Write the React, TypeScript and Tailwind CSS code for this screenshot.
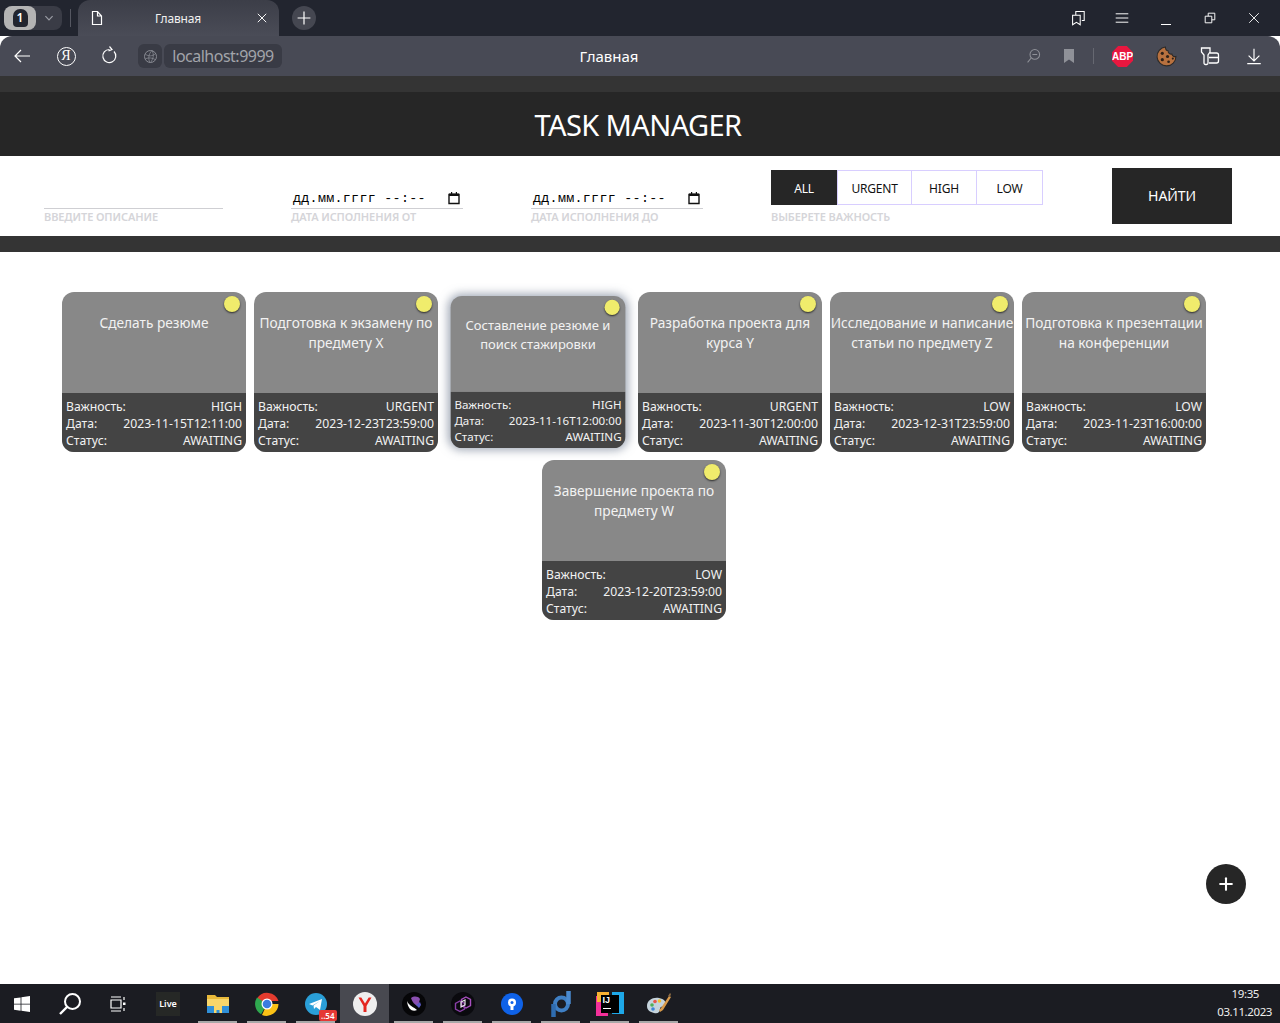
import { Plus } from 'lucide-react';

const SANS = "font-['Noto_Sans','Open_Sans',sans-serif]";

interface Task {
  title: string;
  priority: string;
  date: string;
  hovered?: boolean;
}

const TASKS: Task[] = [
  { title: 'Сделать резюме', priority: 'HIGH', date: '2023-11-15T12:11:00' },
  { title: 'Подготовка к экзамену по предмету X', priority: 'URGENT', date: '2023-12-23T23:59:00' },
  { title: 'Составление резюме и поиск стажировки', priority: 'HIGH', date: '2023-11-16T12:00:00', hovered: true },
  { title: 'Разработка проекта для курса Y', priority: 'URGENT', date: '2023-11-30T12:00:00' },
  { title: 'Исследование и написание статьи по предмету Z', priority: 'LOW', date: '2023-12-31T23:59:00' },
  { title: 'Подготовка к презентации на конференции', priority: 'LOW', date: '2023-11-23T16:00:00' },
  { title: 'Завершение проекта по предмету W', priority: 'LOW', date: '2023-12-20T23:59:00' },
];

const Stroke = ({ children, size = 20, className = 'text-white' }: { children: React.ReactNode; size?: number; className?: string }) => (
  <svg width={size} height={size} viewBox="0 0 20 20" fill="none" stroke="currentColor" strokeWidth="1.3" className={className}>
    {children}
  </svg>
);

const TabBar = () => (
  <div className="flex h-9 bg-[#22252f] text-white">
    <div className="ml-1 mt-1.5 flex h-6 w-[58px] rounded-lg bg-[#3a3c46]">
      <div className="flex h-6 w-8 items-center justify-center rounded-lg bg-[#b4b4b4]">
        <div className="flex h-[18px] w-[15px] items-center justify-center rounded-[4px] rounded-t-[7px] bg-[#22252f] text-xs font-semibold leading-none">1</div>
      </div>
      <div className="flex flex-1 items-center justify-center">
        <Stroke size={12} className="text-[#9a9ca4]"><path d="M4 7l6 6 6-6" strokeWidth="2" /></Stroke>
      </div>
    </div>
    <div className="ml-2 mt-[9px] h-[18px] w-px bg-[#555761]" />
    <div className="ml-[7px] flex h-9 w-[201px] items-center rounded-t-xl bg-gradient-to-b from-[#3c3e48] to-[#4a4c57] pl-3 pr-[11px]">
      <svg width="14" height="16" viewBox="0 0 14 16" fill="none" stroke="white" strokeWidth="1.2">
        <path d="M2.5 1.5h5l4 4.5v8.500h-9zM7.500 1.500v4.500h4" />
      </svg>
      <span className={`${SANS} flex-1 pr-[4px] pt-px text-center text-xs tracking-[-0.15px] text-[#f0f0f0]`}>Главная</span>
      <Stroke size={12} className="text-white"><path d="M3 3l14 14M17 3L3 17" strokeWidth="1.6" /></Stroke>
    </div>
    <div className="ml-[13px] mt-1.5 flex h-6 w-6 items-center justify-center rounded-full bg-[#454751]">
      <Stroke size={16}><path d="M10 2v16M2 10h16" strokeWidth="1.5" /></Stroke>
    </div>
    <div className="flex-1" />
    <div className="mr-1 flex">
      <div className="flex w-11 items-center justify-center pl-0.5">
        <Stroke size={16}>
          <path d="M2 6.500h9.500v12l-4.750-3-4.750 3zM6 6V2h10.500v11h-3" />
        </Stroke>
      </div>
      <div className="flex w-11 items-center justify-center">
        <Stroke size={14}><path d="M1 4h18M1 10h18M1 16h18" strokeWidth="1.4" /></Stroke>
      </div>
      <div className="flex w-11 items-center justify-center pt-3">
        <div className="h-px w-2.5 bg-white" />
      </div>
      <div className="flex w-11 items-center justify-center">
        <Stroke size={12}><path d="M2 7h11v11H2zM7 7V2h11v11h-5" strokeWidth="1.6" /></Stroke>
      </div>
      <div className="flex w-11 items-center justify-center">
        <Stroke size={12}><path d="M2 2l16 16M18 2L2 18" strokeWidth="1.5" /></Stroke>
      </div>
    </div>
  </div>
);

const ToolBar = () => (
  <div className="flex h-10 items-center rounded-t-xl bg-[#484a55] text-white">
    <div className="flex w-11 items-center justify-center">
      <Stroke size={20}><path d="M18 10H3M9 4l-6 6 6 6" strokeWidth="1.2" /></Stroke>
    </div>
    <div className="flex w-11 items-center justify-center">
      <div className="flex h-[19px] w-[19px] items-center justify-center rounded-full border border-white font-['Liberation_Serif',serif] text-sm leading-none">Я</div>
    </div>
    <div className="flex w-11 items-center justify-center">
      <Stroke size={20}><path d="M14 5.500a6.500 6.500 0 1 1-4.500-2M9.500 0.500l2.500 3-3.500 1.500" strokeWidth="1.2" /></Stroke>
    </div>
    <div className="ml-1.5 flex h-6 w-6 items-center justify-center rounded-md bg-[#393b45]">
      <Stroke size={15} className="text-[#8a8c94]">
        <circle cx="10" cy="10" r="8" />
        <path d="M3 7c5 3 9 3 14-1M3 13c5-2 10-1 13 1M12 2c-5 5-5 11-3 16M12 2c3 5 2 11-2 16" strokeWidth="1" />
      </Stroke>
    </div>
    <div className={`${SANS} ml-0.5 flex h-6 w-[118px] items-center justify-center rounded-md bg-[#393b45] text-base tracking-[-0.5px] text-[#a2a4aa]`}>localhost:9999</div>
    <div className={`${SANS} flex-1 pr-[80px] text-center text-[15px] text-white`}>Главная</div>
    <div className="flex w-[35px] items-center justify-center">
      <Stroke size={16} className="text-[#8f9198]">
        <circle cx="11" cy="8" r="6" />
        <path d="M8 8h6M6.500 12.500L2 18" />
      </Stroke>
    </div>
    <div className="flex w-[35px] items-center justify-center">
      <svg width="12" height="14" viewBox="0 0 12 14" fill="#8f9198"><path d="M1 0h10v14l-5-3.500L1 14z" /></svg>
    </div>
    <div className="ml-[7px] mr-1.5 h-4 w-px bg-[#666871]" />
    <div className="flex w-11 items-center justify-center">
      <svg width="21" height="21" viewBox="0 0 22 22">
        <path d="M6.500 0h9L22 6.500v9L15.500 22h-9L0 15.500v-9z" fill="#e8173f" />
        <text x="11" y="15" textAnchor="middle" fontSize="10.500" fontWeight="700" fill="white" fontFamily="Liberation Sans, sans-serif">ABP</text>
      </svg>
    </div>
    <div className="flex w-11 items-center justify-center">
      <svg width="21" height="21" viewBox="0 0 20 20">
        <path d="M9 1a9 9 0 1 0 10 9c-2 .5-3.500-.5-3.800-2.300C13 8 11.500 6.500 11.500 4.500 10 4.500 9 3 9 1z" fill="#b8713f" stroke="#2d2a28" strokeWidth="1" />
        <circle cx="6" cy="7" r="1.500" fill="#2d2018" />
        <circle cx="11" cy="10" r="1.500" fill="#2d2018" />
        <circle cx="6" cy="13" r="1.500" fill="#2d2018" />
        <circle cx="12" cy="15" r="1.300" fill="#2d2018" />
        <circle cx="16" cy="12" r="1" fill="#2d2018" />
      </svg>
    </div>
    <div className="flex w-11 items-center justify-center">
      <Stroke size={20}>
        <path d="M1.500 2h8.500v4l-2 3v8a1.500 1.500 0 0 1-1.500 1.500h-1A1.500 1.500 0 0 1 4 17V9L1.500 6zM10 7h6.500a2 2 0 0 1 2 2v6a2 2 0 0 1-2 2H9M9 11.500h9.500" />
      </Stroke>
    </div>
    <div className="mr-1 flex w-11 items-center justify-center">
      <Stroke size={18}><path d="M10 2v13M4 9.500l6 6 6-6M2.500 18.500h15" strokeWidth="1.3" /></Stroke>
    </div>
  </div>
);

const FieldLabel = ({ children }: { children: React.ReactNode }) => (
  <div className={`${SANS} text-[11px] font-semibold leading-4 tracking-[-0.1px] text-[#d5d5d9]`}>{children}</div>
);

const DateField = ({ label }: { label: string }) => (
  <div className="w-[172px]">
    <div className="flex h-[22px] items-center justify-between border-b border-[#cfcfd3] pl-0.5 pr-[2px] font-['Liberation_Mono',monospace] text-[13.330px] tracking-[0.3px] text-black">
      <span className="whitespace-pre pt-0.5">дд.мм.гггг --:--</span>
      <svg width="12" height="14" viewBox="0 0 12 14" className="mr-[1px]">
        <path d="M1 3.500h10v9H1z" fill="none" stroke="#111" strokeWidth="1.400" />
        <path d="M1 2.500h10v2.500H1zM3 1h1.200v2H3zM7.800 1H9v2H7.800z" fill="#111" />
      </svg>
    </div>
    <FieldLabel>{label}</FieldLabel>
  </div>
);

const Filters = () => (
  <div className="flex h-20 items-start bg-white pl-11">
    <div className="mr-[68px] mt-[31px] w-[179px]">
      <div className="h-[22px] border-b border-[#cfcfd3]" />
      <FieldLabel>ВВЕДИТЕ ОПИСАНИЕ</FieldLabel>
    </div>
    <div className="mr-[68px] mt-[31px]"><DateField label="ДАТА ИСПОЛНЕНИЯ ОТ" /></div>
    <div className="mr-[68px] mt-[31px]"><DateField label="ДАТА ИСПОЛНЕНИЯ ДО" /></div>
    <div className="mt-3.5 w-[272px]">
      <div className={`${SANS} flex h-[35px] text-xs tracking-[-0.2px] text-[#111]`}>
        <div className="flex w-[66px] items-center justify-center bg-[#262626] pt-0.5 text-white">ALL</div>
        <div className="flex w-[75px] items-center justify-center border border-[#d8ceff] pt-0.5">URGENT</div>
        <div className="flex w-[65px] items-center justify-center border border-l-0 border-[#d8ceff] pt-0.5">HIGH</div>
        <div className="flex w-[66px] items-center justify-center border border-l-0 border-[#d8ceff] pt-0.5">LOW</div>
      </div>
      <div className="mt-1"><FieldLabel>ВЫБЕРЕТЕ ВАЖНОСТЬ</FieldLabel></div>
    </div>
    <div className={`${SANS} ml-[69px] mt-3 flex h-14 w-[120px] items-center justify-center bg-[#262626] text-sm tracking-[-0.1px] text-white`}>НАЙТИ</div>
  </div>
);

const TaskCard = ({ task }: { task: Task }) => (
  <div
    className={
      'relative m-1 flex h-40 w-[184px] flex-col overflow-hidden rounded-xl bg-[#888888] ' +
      (task.hovered ? 'scale-[0.95] shadow-[0_0_10px_2px_rgba(80,95,120,0.55)]' : '')
    }
  >
    <div className="absolute right-[6px] top-[4px] h-4 w-4 rounded-full bg-[#f0ec6c] shadow-[0_1px_2px_rgba(0,0,0,0.7)]" />
    <div className="flex-1 px-0 pt-[21px] text-center text-[13.700px] leading-5 text-[#f2f2f2]">{task.title}</div>
    <div className="h-[59px] bg-[#444444] px-1 pt-[5px] text-[12.200px] leading-[17px] text-[#f2f2f2]">
      <div className="flex justify-between"><span>Важность:</span><span>{task.priority}</span></div>
      <div className="flex justify-between"><span>Дата:</span><span>{task.date}</span></div>
      <div className="flex justify-between"><span>Статус:</span><span>AWAITING</span></div>
    </div>
  </div>
);

const Underlined = ({ children, active, mark = true }: { children: React.ReactNode; active?: boolean; mark?: boolean }) => (
  <div className={'relative flex h-[39px] w-[49px] items-center justify-center ' + (active ? 'bg-[#484950]' : '')}>
    {children}
    {mark && <div className="absolute bottom-0 left-[5px] right-[5px] h-0.5 bg-[#a8a8a8]" />}
  </div>
);

const Taskbar = () => (
  <div className="flex h-[39px] items-center bg-[#1b1c22] text-white">
    <div className="flex w-11 items-center justify-center">
      <svg width="16" height="16" viewBox="0 0 16 16" fill="white"><path d="M0 2.300l6.600-.9v6.300H0zM7.400 1.300L16 0v7.700H7.400zM0 8.400h6.600v6.300L0 13.800zM7.400 8.400H16V16l-8.600-1.200z" /></svg>
    </div>
    <div className="flex w-[52px] items-center justify-center">
      <svg width="24" height="24" viewBox="0 0 24 24" fill="none" stroke="white" strokeWidth="2"><circle cx="14.500" cy="9.500" r="7.500" /><path d="M9 15l-7 7" strokeWidth="2.400" /></svg>
    </div>
    <div className="flex w-11 items-center justify-center">
      <svg width="16" height="16" viewBox="0 0 16 16" fill="none" stroke="white" strokeWidth="1.200"><path d="M1 4h10v8H1zM1 1h10M1 15h10M14 1v3M14 12v3" /><path d="M13 6.500h2.500v2.500H13z" fill="white" stroke="none" /></svg>
    </div>
    <div className="flex w-[53px] items-center justify-center pl-[3px]">
      <div className={`${SANS} flex h-6 w-6 items-center justify-center bg-[#262826] text-[9px] font-semibold`}>Live</div>
    </div>
    <Underlined>
      <svg width="24" height="22" viewBox="0 0 24 22">
        <path d="M1 2h8l2 2h12v5H1z" fill="#e8b93a" />
        <path d="M1 6h22v14H1z" fill="#f7d56a" />
        <path d="M1 13h22v7H1z" fill="#2f8fd8" />
        <path d="M8 13h8v7h-2.500v-3h-3v3H8z" fill="#f7d56a" />
      </svg>
    </Underlined>
    <Underlined>
      <svg width="24" height="24" viewBox="0 0 24 24">
        <path d="M12 12L2 6.500A12 12 0 0 1 23.500 9H12z" fill="#e33b2e" />
        <path d="M12 12l-5.500 9.500 -0.500.8A12 12 0 0 1 2 5.500z" fill="#2fa84f" />
        <path d="M12 12h11.500A12 12 0 0 1 7 23z" fill="#fbc116" />
        <circle cx="12" cy="12" r="5.500" fill="white" />
        <circle cx="12" cy="12" r="4.300" fill="#3b7de0" />
      </svg>
    </Underlined>
    <Underlined>
      <div className="relative">
        <svg width="22" height="22" viewBox="0 0 22 22">
          <circle cx="11" cy="11" r="11" fill="#2a9fd8" />
          <path d="M4 11l13-5-2 11-4-3-2 2-.5-3.500L15 8l-7.500 4.500z" fill="white" />
        </svg>
        <div className={`${SANS} absolute -bottom-1.5 -right-2.5 h-[11px] rounded-[2px] bg-[#e53935] px-0.5 text-[8px] font-semibold leading-[11px]`}>..54</div>
      </div>
    </Underlined>
    <Underlined active mark={false}>
      <svg width="24" height="24" viewBox="0 0 24 24">
        <circle cx="12" cy="12" r="12" fill="#eeeeee" />
        <path d="M5.500 5.500l5 8.500v6h3v-6l5-8.500h-2.800L12 11.500 8.300 5.500z" fill="#e52620" />
      </svg>
    </Underlined>
    <Underlined>
      <svg width="24" height="24" viewBox="0 0 24 24">
        <circle cx="12" cy="12" r="12" fill="#060608" />
        <path d="M5 9c2 5 7 6 10 9-4 2-9 0-10-9z" fill="white" />
        <path d="M9 6c3-2 7-2 9 1l-2 7c-3-1-6-4-7-8z" fill="#8a4fb0" />
        <path d="M14 13l4-3 1 3-2 3z" fill="#5a5ac8" />
      </svg>
    </Underlined>
    <Underlined>
      <svg width="24" height="24" viewBox="0 0 24 24" fill="none">
        <circle cx="12" cy="12" r="12" fill="#0a0a0e" />
        <path d="M15 5l4.500 2.500v6L15 16l-4.500-2.500v-6z" stroke="#a84fc0" strokeWidth="1.400" />
        <path d="M9 9l4.500 2.500v5.500L9 19.500 4.500 17v-5.500z" stroke="#8a3fa8" strokeWidth="1.400" />
        <path d="M14 8l-4 2v5l4-2z" stroke="#e8e8e8" strokeWidth="1.200" />
      </svg>
    </Underlined>
    <Underlined>
      <svg width="22" height="22" viewBox="0 0 22 22">
        <circle cx="11" cy="11" r="11" fill="#0f62e8" />
        <circle cx="11" cy="9.500" r="4" fill="white" />
        <circle cx="11" cy="9.500" r="1.500" fill="#0f62e8" />
        <path d="M9.500 12h3v5h-3z" fill="white" />
      </svg>
    </Underlined>
    <Underlined>
      <svg width="20" height="26" viewBox="0 0 20 26" fill="none">
        <circle cx="10.500" cy="13" r="6.500" stroke="#3f7fc4" strokeWidth="4" />
        <path d="M17.500 0v13" stroke="#4a8ad0" strokeWidth="4.500" />
        <path d="M2.500 13v13" stroke="#2f6cb0" strokeWidth="4.500" />
      </svg>
    </Underlined>
    <Underlined>
      <div className="relative h-6 w-6">
        <div className="absolute -left-0.5 top-1 h-5 w-3 bg-[#f4309a]" />
        <div className="absolute -right-0.5 top-0 h-[22px] w-3 bg-[#1ea8e8]" />
        <div className="absolute -left-px top-0 h-2.5 w-3 bg-[#f9b233]" />
        <div className={`absolute inset-[3px] bg-black pl-[2px] font-['Liberation_Sans',sans-serif] text-[9px] font-bold leading-[10px]`}>
          IJ
          <div className="mt-[3px] h-[1.500px] w-2 bg-white" />
        </div>
      </div>
    </Underlined>
    <Underlined>
      <svg width="26" height="24" viewBox="0 0 26 24">
        <path d="M1 14c0-6 6-9 12-8 5 1 8 4 6 7-2 2-5 1-5 4s-2 5-6 4-7-3-7-7z" fill="#c5d3dc" />
        <circle cx="6" cy="13" r="1.800" fill="#4fae5a" />
        <circle cx="9" cy="9.500" r="1.800" fill="#e8574a" />
        <circle cx="13.500" cy="9" r="1.800" fill="#f2c230" />
        <circle cx="7" cy="17" r="1.800" fill="#3f86d8" />
        <path d="M13 18l2-2L23 4l2 1-8 13-3 2z" fill="#d99a4a" />
        <path d="M22 4l2-3 1 1-1 3z" fill="#8a6a44" />
      </svg>
    </Underlined>
    <div className="flex-1" />
    <div className={`${SANS} mr-2 pb-px text-right text-[11.500px] leading-[18px] tracking-[-0.4px] text-[#eeeeee]`}>
      <div className="pr-[13px]">19:35</div>
      <div>03.11.2023</div>
    </div>
  </div>
);

export default function App() {
  return (
    <div className={`${SANS} flex h-[1023px] flex-col overflow-hidden bg-white`}>
      <TabBar />
      <ToolBar />
      <div className="h-4 bg-[#343434]" />
      <div className="flex h-16 items-center justify-center bg-[#262626] pr-1 pt-px text-[29px] tracking-[-0.6px] text-white">TASK MANAGER</div>
      <Filters />
      <div className="h-4 bg-[#343434]" />
      <main className="relative flex-1">
        <div className="ml-[58px] mt-9 flex w-[1152px] flex-wrap justify-center">
          {TASKS.map((task) => (
            <TaskCard key={task.title} task={task} />
          ))}
        </div>
        <div className="absolute bottom-[80px] right-[34px] flex h-10 w-10 items-center justify-center rounded-full bg-[#262626] text-white">
          <Plus size={20} strokeWidth={2.500} />
        </div>
      </main>
      <Taskbar />
    </div>
  );
}
